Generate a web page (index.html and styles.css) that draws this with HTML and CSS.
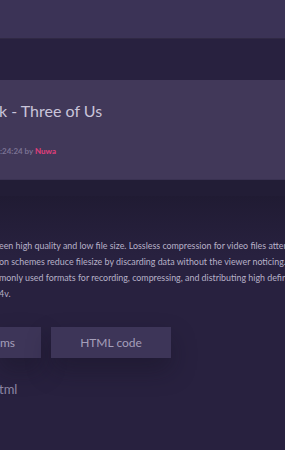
FILE: index.html
```html
<!DOCTYPE html>
<html lang="en">
<head>
  <meta charset="UTF-8">
  <meta name="viewport" content="width=device-width, initial-scale=1.0">
  <title>Three of Us</title>
  <link rel="stylesheet" href="styles.css">
</head>
<body>

<div class="topbar"></div>

<div class="page">
  <div class="hero">
    <h1 class="hero-title">k - Three of Us</h1>
    <div class="hero-meta">:24:24 by <span class="author">Nuwa</span></div>
  </div>
  <div class="hero-band"></div>

  <div class="content">
    <div class="desc">
      <div class="line">een high quality and low file size. Lossless compression for video files atten</div>
      <div class="line">on schemes reduce filesize by discarding data without the viewer noticing. T</div>
      <div class="line">monly used formats for recording, compressing, and distributing high definit</div>
      <div class="line">4v.</div>
    </div>

    <div class="actions">
      <button class="btn btn-cut">ms</button>
      <button class="btn">HTML code</button>
    </div>

    <div class="file-link">tml</div>
  </div>
</div>

</body>
</html>
```

FILE: styles.css
```css
html, body {
  overflow: hidden;
}

body {
  margin: 0;
  background-color: #28213f;
  font-family: 'Lato', sans-serif;
  color: #b9b3c9;
}

.topbar {
  height: 38px;
  background-color: #3b3356;
  border-bottom: 1px solid #302944;
}

.page {
  padding-top: 41px;
}

.hero {
  background-color: #413859;
  height: 100px;
  padding-top: 20px;
  box-sizing: border-box;
  border-bottom: 1px solid #3a3252;
}

.hero-title {
  margin: 0 0 0 -1px;
  font-size: 16px;
  line-height: 22px;
  font-weight: normal;
  color: #c9c4d9;
  white-space: nowrap;
}

.hero-meta {
  margin-top: 24px;
  font-size: 8px;
  font-weight: bold;
  color: #7b7394;
  white-space: nowrap;
}

.author {
  color: #e23f7c;
}

.hero-band {
  height: 16px;
  background-color: #221d36;
}

.content {
  background: linear-gradient(#201b33, #28213f 60px);
  padding-top: 42px;
  height: 228px;
  overflow: hidden;
}

.desc {
  font-size: 8.9px;
  line-height: 16px;
  color: #b7b1c8;
  overflow: hidden;
}

.line {
  white-space: nowrap;
  margin-left: -1px;
}

.actions {
  display: flex;
  gap: 10px;
  margin-top: 25px;
}

.btn {
  height: 31px;
  border: none;
  border-radius: 0;
  background-color: #3d3558;
  color: #a59fba;
  font-family: inherit;
  font-size: 12px;
  padding: 0;
  width: 120px;
  flex-shrink: 0;
  box-shadow: 0 12px 24px rgba(18, 14, 30, 0.35);
}

.btn-cut {
  width: 41px;
  text-align: right;
  padding-right: 30px;
  box-sizing: border-box;
}

.file-link {
  margin-top: 23px;
  font-size: 13px;
  color: #8c85a2;
  margin-left: -1px;
}
```
